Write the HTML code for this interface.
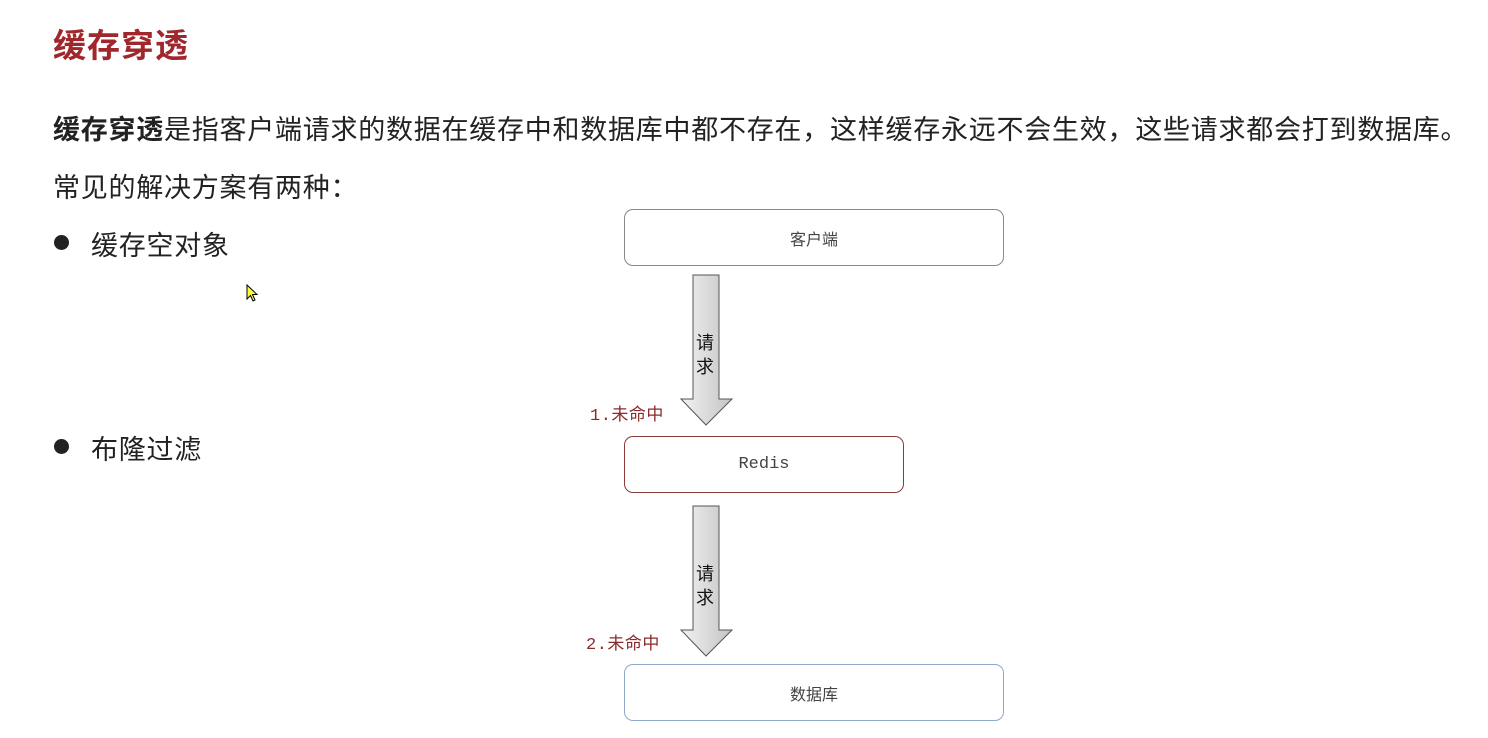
<!DOCTYPE html>
<html><head><meta charset="utf-8"><style>
body{margin:0;width:1488px;height:738px;background:#fff;position:relative;overflow:hidden;font-family:"Liberation Sans","Noto Sans CJK SC",sans-serif;color:#222}
.a{position:absolute;white-space:nowrap}
.t{left:53px;top:19px;font-size:33px;color:#a0282d;font-weight:bold;letter-spacing:1px}
.p{font-size:27px;letter-spacing:0.75px}
.dot{position:absolute;width:15px;height:15px;border-radius:50%;background:#222}
.box{position:absolute;border-radius:9px;background:#fff;display:flex;align-items:center;justify-content:center;font-size:16px;color:#444}
.lbl{font-family:"Liberation Mono","Noto Sans CJK SC",monospace;font-size:17px;color:#8b2a2a;letter-spacing:0.5px}
</style></head><body>
<div class="a t">缓存穿透</div>
<div class="a p" style="left:53px;top:108px"><b>缓存穿透</b>是指客户端请求的数据在缓存中和数据库中都不存在，这样缓存永远不会生效，这些请求都会打到数据库。</div>
<div class="a p" style="left:53px;top:166px">常见的解决方案有两种：</div>
<div class="dot" style="left:54px;top:235px"></div>
<div class="a p" style="left:91px;top:224px">缓存空对象</div>
<div class="dot" style="left:54px;top:439px"></div>
<div class="a p" style="left:91px;top:428px">布隆过滤</div>
<svg class="a" style="left:246px;top:284px" width="14" height="20"><path d="M1 1 L1 15 L4.5 11.5 L7 17 L9 16 L6.5 10.5 L11 10.5 Z" fill="#ff3" stroke="#000" stroke-width="1"/></svg>
<div class="box" style="left:624px;top:209px;width:378px;height:55px;border:1px solid #888">客户端</div>
<div class="box" style="left:624px;top:436px;width:278px;height:55px;border:1px solid #8b3a3a;font-family:'Liberation Mono',monospace;font-size:17px">Redis</div>
<div class="box" style="left:624px;top:664px;width:378px;height:55px;border:1px solid #8fa8cc">数据库</div>
<svg class="a" style="left:0;top:0" width="1488" height="738">
<defs><linearGradient id="g" x1="0" x2="1"><stop offset="0" stop-color="#f2f2f2"/><stop offset="1" stop-color="#c4c4c4"/></linearGradient></defs>
<path d="M693 275 L719 275 L719 399 L732 399 L706 425 L681 399 L693 399 Z" fill="url(#g)" stroke="#555" stroke-width="1"/>
<path d="M693 506 L719 506 L719 630 L732 630 L706 656 L681 630 L693 630 Z" fill="url(#g)" stroke="#555" stroke-width="1"/>
</svg>
<div class="a" style="left:696px;top:331px;font-size:18px;line-height:24px;color:#111">请<br>求</div>
<div class="a" style="left:696px;top:562px;font-size:18px;line-height:24px;color:#111">请<br>求</div>
<div class="a lbl" style="left:590px;top:400px">1.未命中</div>
<div class="a lbl" style="left:586px;top:629px">2.未命中</div>
</body></html>
